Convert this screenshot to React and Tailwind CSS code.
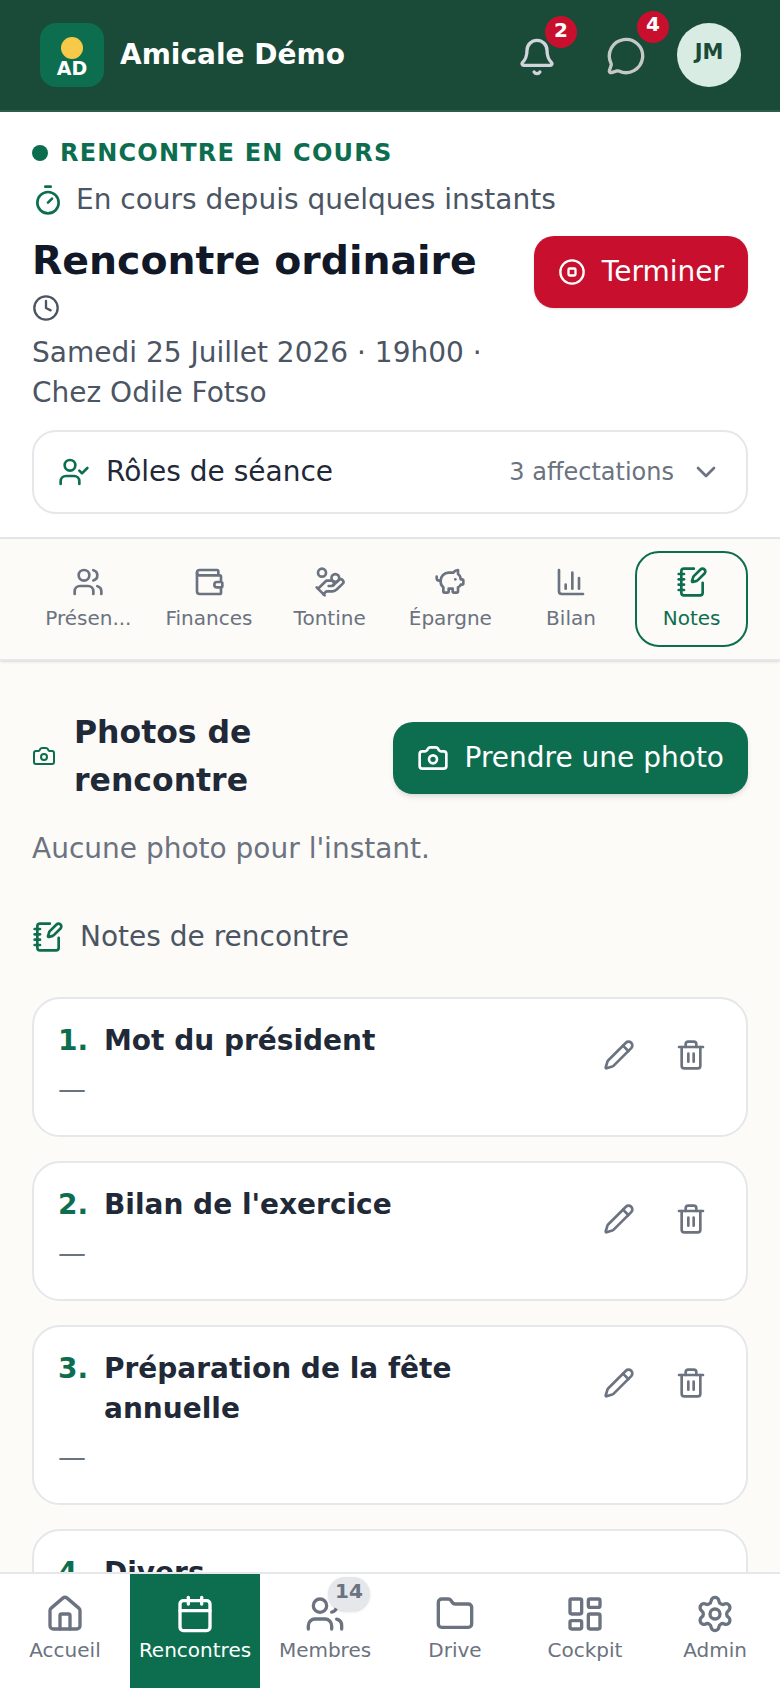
import React from 'react';
import {
    Bell, MessageCircle, Timer, Clock, CircleStop, UserCheck, ChevronDown, Users, Wallet, HandCoins,
    PiggyBank, ChartColumn, NotebookPen, Camera, Pencil, Trash2, House, Calendar, Folder, LayoutDashboard, Settings
} from 'lucide-react';

const tabs = [
    { label: 'Présen...', icon: Users },
    { label: 'Finances', icon: Wallet },
    { label: 'Tontine', icon: HandCoins },
    { label: 'Épargne', icon: PiggyBank },
    { label: 'Bilan', icon: ChartColumn },
    { label: 'Notes', icon: NotebookPen, active: true }
];

const notes = [
    { n: 1, title: 'Mot du président' },
    { n: 2, title: "Bilan de l'exercice" },
    { n: 3, title: 'Préparation de la fête annuelle' },
    { n: 4, title: 'Divers' }
];

const navItems = [
    { label: 'Accueil', icon: House },
    { label: 'Rencontres', icon: Calendar, active: true },
    { label: 'Membres', icon: Users, badge: '14' },
    { label: 'Drive', icon: Folder },
    { label: 'Cockpit', icon: LayoutDashboard },
    { label: 'Admin', icon: Settings }
];

const App = () => {
    return (
        <div className="h-[1688px] flex flex-col overflow-hidden bg-[#fcfbf7] font-['DejaVu_Sans',sans-serif]">
            {/* En-tête */}
            <header className="h-[112px] shrink-0 bg-[#1a4a38] border-b-2 border-[#2f5d4c] pl-10 pr-[39px] flex items-center">
                <div className="w-16 h-16 rounded-2xl bg-[#0d6e4f] flex flex-col items-center pt-[14px]">
                    <div className="w-[22px] h-[22px] rounded-full bg-[#f7c948]" />
                    <span className="text-[19px] leading-[20px] font-bold text-white -mt-[1px]">AD</span>
                </div>
                <span className="ml-4 text-[28px] font-bold text-white">Amicale Démo</span>
                <div className="ml-auto flex items-center">
                    <div className="relative w-10 h-10 mt-1">
                        <Bell size={40} strokeWidth={2} className="text-[#d1d5db]" />
                        <span className="absolute -top-[21px] left-[28px] w-8 h-8 pb-1 rounded-full bg-[#c8102e] text-white text-[20px] font-bold flex items-center justify-center">2</span>
                    </div>
                    <div className="relative w-10 h-10 mt-[2px] ml-[49px]">
                        <MessageCircle size={40} strokeWidth={2} className="text-[#c4c9c7]" />
                        <span className="absolute -top-[25px] left-[31px] w-8 h-8 pb-[6px] rounded-full bg-[#c8102e] text-white text-[20px] font-bold flex items-center justify-center">4</span>
                    </div>
                    <div className="ml-[31px] w-16 h-16 pb-[5px] rounded-full bg-[#d8ece3] text-[#1a4a38] text-[21px] font-bold flex items-center justify-center">JM</div>
                </div>
            </header>

            <div className="flex-1 min-h-0 overflow-hidden">
                {/* Rencontre */}
                <section className="bg-white px-8 pt-[25px] pb-[23px] border-b-2 border-[#e5e7eb]">
                    <div className="flex items-center gap-3 h-8">
                        <span className="w-4 h-4 rounded-full bg-[#0d6e4f]" />
                        <span className="text-[24px] font-bold tracking-[1.2px] text-[#0d6e4f]">RENCONTRE EN COURS</span>
                    </div>
                    <div className="flex items-center gap-3 mt-[11px] text-[28px] leading-[40px] text-[#4b5563]">
                        <Timer size={32} className="text-[#0d6e4f]" />
                        <span>En cours depuis quelques instants</span>
                    </div>
                    <div className="flex justify-between items-start mt-3">
                        <div>
                            <h1 className="text-[39.4px] leading-[56px] font-bold text-[#111827]">Rencontre ordinaire</h1>
                            <Clock size={28} className="text-[#4b5563] mt-[6px]" />
                            <p className="mt-[11px] text-[28px] leading-[40px] text-[#4b5563]">Samedi 25 Juillet 2026 · 19h00 ·<br />Chez Odile Fotso</p>
                        </div>
                        <button className="mt-[4px] h-[72px] px-6 rounded-[20px] bg-[#c8102e] text-white text-[28px] flex items-center gap-4 shadow-sm">
                            <CircleStop size={28} />
                            Terminer
                        </button>
                    </div>
                    <div className="mt-[17px] h-[84px] rounded-[24px] border-2 border-[#e5e7eb] bg-white px-6 flex items-center">
                        <UserCheck size={32} className="text-[#0d6e4f]" />
                        <span className="ml-4 text-[28px] text-[#1f2937]">Rôles de séance</span>
                        <span className="ml-auto text-[24px] text-[#6b7280]">3 affectations</span>
                        <ChevronDown size={32} className="ml-4 text-[#6b7280]" />
                    </div>
                </section>

                {/* Onglets */}
                <nav className="h-[122px] bg-[#fcfbf7] border-b-2 border-[#e5e7eb] shadow-sm px-8 grid grid-cols-6 gap-2 items-center">
                    {tabs.map((tab) => {
                        const Icon = tab.icon;
                        return (
                            <div key={tab.label} className={`h-[96px] min-w-0 flex flex-col items-center justify-center gap-[6px] rounded-[24px] ${tab.active ? 'border-2 border-[#0d6e4f] text-[#0d6e4f]' : 'text-[#6b7280]'}`}>
                                <Icon size={32} />
                                <span className="text-[20px] leading-[28px]">{tab.label}</span>
                            </div>
                        );
                    })}
                </nav>

                {/* Contenu */}
                <main className="px-8 pt-[51px]">
                    <div className="flex items-center justify-between">
                        <div className="flex items-center gap-[18px] -mt-1">
                            <Camera size={24} className="text-[#0d6e4f]" />
                            <h2 className="text-[31.5px] leading-[48px] font-bold text-[#1f2937] w-[260px]">Photos de rencontre</h2>
                        </div>
                        <button className="h-[72px] px-6 rounded-[20px] bg-[#0d6e4f] text-white text-[28px] flex items-center gap-4 shadow-md">
                            <Camera size={32} />
                            Prendre une photo
                        </button>
                    </div>
                    <p className="mt-[25px] text-[28px] leading-[40px] text-[#6b7280]">Aucune photo pour l'instant.</p>
                    <div className="mt-[48px] flex items-center gap-4 text-[28px] leading-[40px] text-[#4b5563]">
                        <NotebookPen size={32} className="text-[#0d6e4f]" />
                        <span>Notes de rencontre</span>
                    </div>
                    <div className="mt-10 space-y-[24.5px]">
                        {notes.map((note) => (
                            <div key={note.n} className="rounded-[28px] border-2 border-[#e5e7eb] bg-white pl-6 pr-[39px] pt-[22px] pb-[24.5px] flex items-start">
                                <div className="flex-1">
                                    <div className="flex text-[28px] leading-[40px] font-bold">
                                        <span className="w-[46px] shrink-0 text-[#0d6e4f]">{note.n}.</span>
                                        <span className="text-[#1f2937] max-w-[400px]">{note.title}</span>
                                    </div>
                                    <div className="mt-[9px] text-[28px] leading-[40px] text-[#6b7280]">—</div>
                                </div>
                                <div className="flex items-center gap-10 pt-[18px]">
                                    <Pencil size={32} className="text-[#6b7280]" />
                                    <Trash2 size={32} className="text-[#6b7280]" />
                                </div>
                            </div>
                        ))}
                    </div>
                </main>
            </div>

            {/* Navigation bas */}
            <footer className="h-[116px] shrink-0 bg-white border-t-2 border-[#e5e7eb] grid grid-cols-6">
                {navItems.map((item) => {
                    const Icon = item.icon;
                    return (
                        <div key={item.label} className={`relative flex flex-col items-center pt-[20px] ${item.active ? 'bg-[#0d6e4f] text-white' : 'text-[#6b7280]'}`}>
                            <Icon size={40} />
                            <span className="text-[20px] leading-[28px] mt-[2px]">{item.label}</span>
                            {item.badge && (
                                <span className="absolute top-[3px] left-[68px] w-[42px] h-[34px] pb-[6px] rounded-full bg-[#e5e7eb] text-[#6b7280] text-[20px] font-bold flex items-center justify-center shadow-sm">{item.badge}</span>
                            )}
                        </div>
                    );
                })}
            </footer>
        </div>
    );
};

export default App;
